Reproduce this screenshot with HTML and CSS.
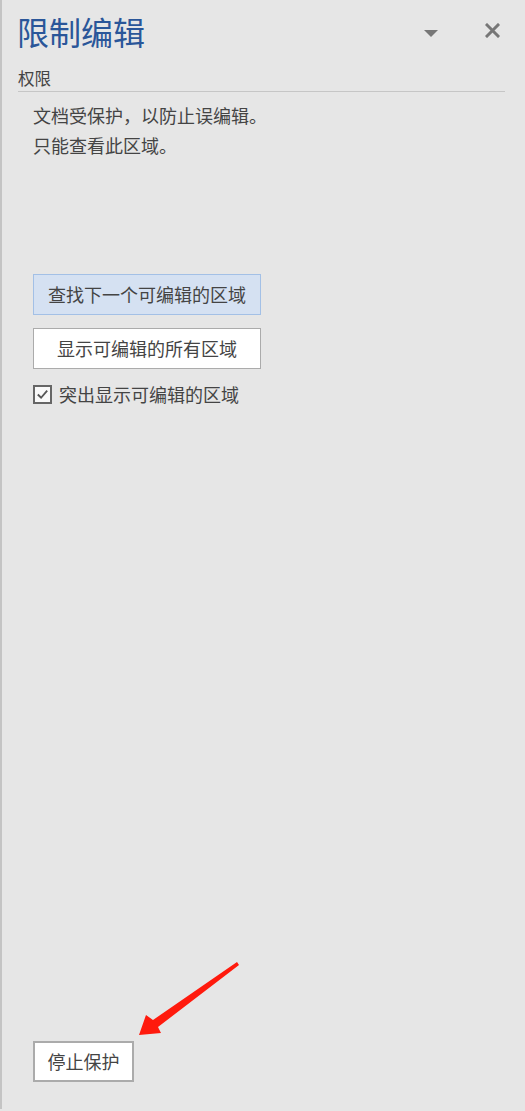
FILE: index.html
```html
<!DOCTYPE html>
<html lang="zh-CN">
<head>
<meta charset="utf-8">
<title>限制编辑</title>
<link rel="stylesheet" href="styles.css">
</head>
<body>
<div class="pane">
  <div class="header">
    <h1 class="title">限制编辑</h1>
    <div class="controls">
      <svg class="icon-drop" width="14" height="8" viewBox="0 0 14 8"><polygon points="0,0 14,0 7,7" fill="#777"/></svg>
      <svg class="icon-close" width="15" height="15" viewBox="0 0 15 15"><path d="M2 2 L13 13 M13 2 L2 13" stroke="#777" stroke-width="3" stroke-linecap="square"/></svg>
    </div>
  </div>
  <div class="section-label">权限</div>
  <div class="desc">
    <p>文档受保护，以防止误编辑。</p>
    <p>只能查看此区域。</p>
  </div>
  <div class="actions">
    <button class="btn btn-primary">查找下一个可编辑的区域</button>
    <button class="btn">显示可编辑的所有区域</button>
    <label class="check-row">
      <span class="checkbox"><svg width="16" height="16" viewBox="0 0 16 16"><path d="M3 8.5 L6.5 12 L13 4.5" fill="none" stroke="#555" stroke-width="2"/></svg></span>
      <span>突出显示可编辑的区域</span>
    </label>
  </div>
  <div class="footer">
    <button class="btn btn-stop">停止保护</button>
  </div>
  <svg class="arrow" width="115" height="85" viewBox="0 0 115 85">
    <polygon points="9,80 16,60 23,65 107,7 109,10 28,72 31,78" fill="#ff1a0d"/>
  </svg>
</div>
</body>
</html>
```

FILE: styles.css
```css
html, body {
  margin: 0;
  padding: 0;
  background: #e6e6e6;
}
body {
  font-family: "Noto Sans CJK SC", "Noto Sans", sans-serif;
  color: #444;
}
.pane {
  position: relative;
  box-sizing: border-box;
  height: 1109px;
  border-left: 2px solid #c4c4c4;
  display: flex;
  flex-direction: column;
}
.header {
  display: flex;
  align-items: center;
  height: 66px;
  padding-left: 15px;
  padding-right: 25px;
}
.title {
  margin: 0 0 4px 0;
  font-size: 32px;
  font-weight: normal;
  line-height: 62px;
  color: #2a5699;
  flex: 1;
}
.controls {
  display: flex;
  align-items: center;
  gap: 47px;
}
.icon-drop {
  display: block;
  margin-top: 1px;
}
.icon-close {
  display: block;
  margin-top: -5px;
}
.section-label {
  margin-left: 16px;
  margin-right: 20px;
  height: 25px;
  line-height: 25px;
  font-size: 16.5px;
  border-bottom: 1px solid #c6c6c6;
}
.desc {
  margin-top: 8px;
  margin-left: 31px;
  font-size: 18px;
  line-height: 30px;
}
.desc p {
  margin: 0;
}
.actions {
  margin-top: 114px;
  margin-left: 31px;
  display: flex;
  flex-direction: column;
  align-items: flex-start;
  gap: 13px;
}
.btn {
  box-sizing: border-box;
  width: 228px;
  height: 41px;
  background: #fff;
  border: 1px solid #ababab;
  font-family: inherit;
  font-size: 18px;
  color: #444;
  padding: 0;
  line-height: 39px;
  text-align: center;
}
.btn-primary {
  background: #d5e1f2;
  border-color: #a3c0e6;
}
.check-row {
  display: flex;
  align-items: center;
  gap: 7px;
  font-size: 18px;
  line-height: 24px;
}
.checkbox {
  box-sizing: border-box;
  width: 19px;
  height: 19px;
  border: 2px solid #666;
  background: #f9f9f9;
  display: flex;
  align-items: center;
  justify-content: center;
}
.checkbox svg {
  display: block;
}
.footer {
  margin-top: auto;
  margin-left: 31px;
  margin-bottom: 27px;
}
.btn-stop {
  width: 101px;
  border-width: 2px;
  line-height: 37px;
}
.arrow {
  position: absolute;
  left: 128px;
  top: 955px;
}
```
